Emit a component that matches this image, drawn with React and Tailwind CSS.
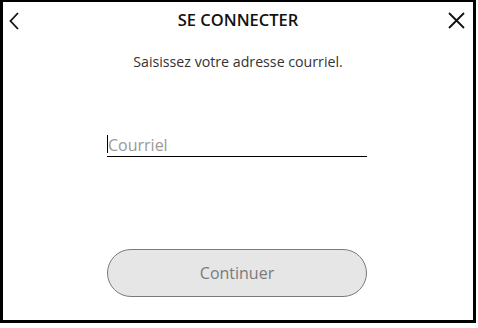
export default function App() {
  return (
    <div className="w-[478px] h-[328px] bg-white" style={{ fontFamily: '"Open Sans", sans-serif' }}>
      <div className="w-[476px] h-[323px] border-[3px] border-t-2 border-black flex flex-col">
        {/* header */}
        <div className="grid grid-cols-[40px_1fr_40px] items-center h-[37px]">
          <div className="pl-[6px] flex">
            <svg width="10" height="18" viewBox="0 0 10 18" fill="none" stroke="#111" strokeWidth="1.8">
              <path d="M9 1 L1.5 9 L9 17" />
            </svg>
          </div>
          <div className="text-center text-[16.5px] font-semibold text-[#111]">SE CONNECTER</div>
          <div className="pr-[8px] flex justify-end">
            <svg width="17" height="17" viewBox="0 0 17 17" fill="none" stroke="#111" strokeWidth="1.8">
              <path d="M1 1 L16 16 M16 1 L1 16" />
            </svg>
          </div>
        </div>
        <p className="text-center text-[14.2px] text-[#333] mt-[12px]">Saisissez votre adresse courriel.</p>
        <div className="mt-[60px] ml-[104px] w-[260px] border-b border-black h-[25px] flex items-end pb-[1px]">
          <span className="w-px h-[18px] bg-black mb-[2px]" />
          <span className="text-[16px] leading-[20px] text-[#999]">Courriel</span>
        </div>
        <div className="mt-[92px] ml-[104px] w-[260px] h-[48px] rounded-full bg-[#e6e6e6] border border-[#7a7a7a] flex items-center justify-center">
          <span className="text-[16px] font-medium text-[#7a7a7a]">Continuer</span>
        </div>
      </div>
    </div>
  )
}
